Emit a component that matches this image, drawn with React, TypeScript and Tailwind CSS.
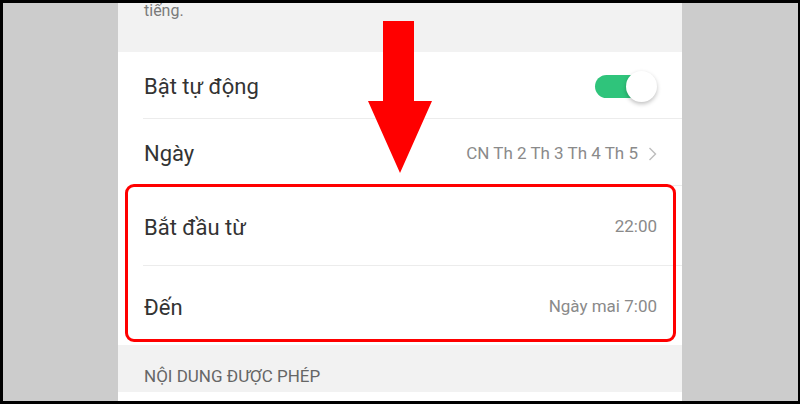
import React from 'react';

const font = { fontFamily: 'Roboto, "Noto Sans", sans-serif' };

function Toggle() {
  return (
    <div className="relative w-[62px] h-[31px]">
      <div className="absolute left-0 top-[4px] w-[56px] h-[23px] rounded-full bg-[#2fc47b]" />
      <div className="absolute right-0 top-0 w-[31px] h-[31px] rounded-full bg-white shadow-[0_2px_4px_rgba(0,0,0,0.25)]" />
    </div>
  );
}

function Chevron() {
  return (
    <svg width="9" height="14" viewBox="0 0 9 14" className="ml-[10px]">
      <polyline points="1.5,1 7.5,7 1.5,13" fill="none" stroke="#bdbdbd" strokeWidth="1.4" />
    </svg>
  );
}

interface Row {
  label: string;
  height: string;
  right: React.ReactNode;
  last?: boolean;
}

const rows: Row[] = [
  { label: 'Bật tự động', height: 'h-[67px]', right: <Toggle /> },
  {
    label: 'Ngày',
    height: 'h-[67px]',
    right: (
      <div className="flex items-center">
        <span className="text-[17px] text-[#8a8a8a]">CN Th 2 Th 3 Th 4 Th 5</span>
        <Chevron />
      </div>
    ),
  },
  { label: 'Bắt đầu từ', height: 'h-[80px]', right: <span className="text-[17px] text-[#8a8a8a]">22:00</span> },
  { label: 'Đến', height: 'h-[79px]', right: <span className="text-[17px] text-[#8a8a8a]">Ngày mai 7:00</span>, last: true },
];

export default function App() {
  return (
    <div className="w-[800px] h-[404px] bg-black pt-[3px] pl-[3px] pr-[2px] pb-[3px]" style={font}>
      <div className="flex h-full bg-[#cccccc]">
        <div className="w-[115px] shrink-0" />
        <div className="relative w-[564px] shrink-0 overflow-hidden bg-white">
          <div className="h-[49px] bg-[#f2f2f2] pl-[26px]">
            <div className="relative -top-[2px] text-[16px] leading-[20px] text-[#7a7a7a]">tiếng.</div>
          </div>
          <div className="pl-[25px]">
            {rows.map((r) => (
              <div
                key={r.label}
                className={`${r.height} flex items-center justify-between pr-[25px] pt-[3px] ${r.last ? '' : 'border-b border-[#ececec]'}`}
              >
                <span className="pl-[1px] text-[22px] text-[#333333]">{r.label}</span>
                {r.right}
              </div>
            ))}
          </div>
          <div className="h-[47px] bg-[#f2f2f2] pl-[26px] pt-[21px]">
            <div className="text-[17px] leading-[20px] text-[#666666]">NỘI DUNG ĐƯỢC PHÉP</div>
          </div>
          <div className="h-[9px] bg-white" />

          <div className="absolute left-[7px] top-[181px] w-[551px] h-[158px] rounded-[9px] border-[3px] border-[#ff0000]" />
          <svg className="absolute left-[250px] top-[18px]" width="64" height="152" viewBox="0 0 64 152">
            <polygon points="15,0 46,0 46,80 64,80 32,152 0,80 15,80" fill="#ff0000" />
          </svg>
        </div>
        <div className="flex-1" />
      </div>
    </div>
  );
}
